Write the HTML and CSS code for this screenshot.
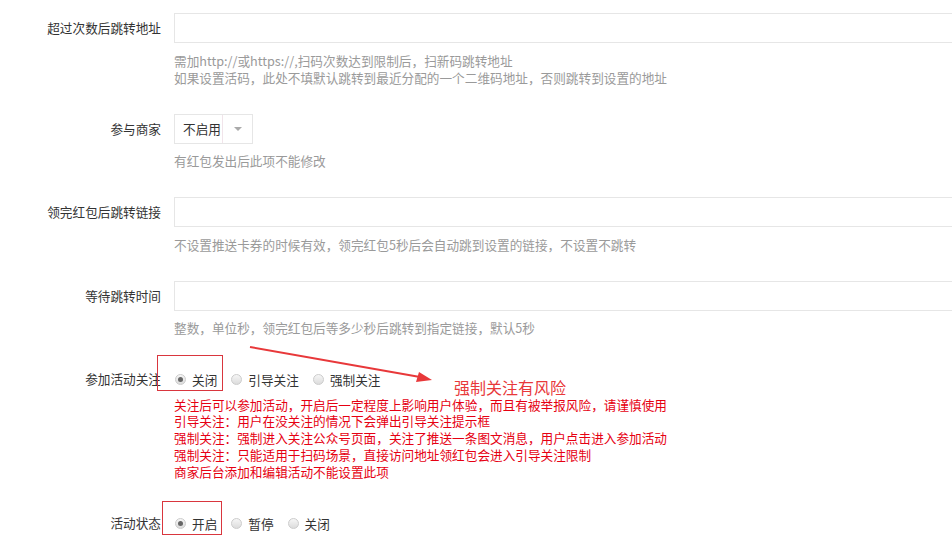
FILE: index.html
```html
<!DOCTYPE html>
<html lang="zh-CN">
<head>
<meta charset="utf-8">
<title>活动设置</title>
<link rel="stylesheet" href="styles.css">
</head>
<body>
<div class="page">
  <div class="group">
    <div class="label">超过次数后跳转地址</div>
    <div class="control">
      <div class="input"></div>
      <div class="help">需加http://或https://,扫码次数达到限制后，扫新码跳转地址<br>如果设置活码，此处不填默认跳转到最近分配的一个二维码地址，否则跳转到设置的地址</div>
    </div>
  </div>

  <div class="group">
    <div class="label">参与商家</div>
    <div class="control">
      <div class="select"><span class="select-text">不启用</span><span class="select-arrow"></span></div>
      <div class="help">有红包发出后此项不能修改</div>
    </div>
  </div>

  <div class="group">
    <div class="label">领完红包后跳转链接</div>
    <div class="control">
      <div class="input"></div>
      <div class="help">不设置推送卡券的时候有效，领完红包5秒后会自动跳到设置的链接，不设置不跳转</div>
    </div>
  </div>

  <div class="group">
    <div class="label">等待跳转时间</div>
    <div class="control">
      <div class="input"></div>
      <div class="help">整数，单位秒，领完红包后等多少秒后跳转到指定链接，默认5秒</div>
    </div>
  </div>

  <div class="group">
    <div class="label">参加活动关注</div>
    <div class="control">
      <div class="radios">
        <span class="mark-box mark-follow"></span>
        <label class="radio"><span class="dot checked"></span>关闭</label>
        <label class="radio"><span class="dot"></span>引导关注</label>
        <label class="radio"><span class="dot"></span>强制关注</label>
      </div>
      <div class="warn">关注后可以参加活动，开启后一定程度上影响用户体验，而且有被举报风险，请谨慎使用<br>引导关注：用户在没关注的情况下会弹出引导关注提示框<br>强制关注：强制进入关注公众号页面，关注了推送一条图文消息，用户点击进入参加活动<br>强制关注：只能适用于扫码场景，直接访问地址领红包会进入引导关注限制<br>商家后台添加和编辑活动不能设置此项</div>
    </div>
  </div>

  <div class="group">
    <div class="label">活动状态</div>
    <div class="control">
      <div class="radios">
        <span class="mark-box mark-status"></span>
        <label class="radio"><span class="dot checked"></span>开启</label>
        <label class="radio"><span class="dot"></span>暂停</label>
        <label class="radio"><span class="dot"></span>关闭</label>
      </div>
    </div>
  </div>

  <svg class="arrow" width="200" height="50" viewBox="0 0 200 50">
    <line x1="2" y1="2" x2="172" y2="32" stroke="#e8383a" stroke-width="2"/>
    <polygon points="184,35 168,37 171,27" fill="#e8383a"/>
  </svg>
  <div class="note">强制关注有风险</div>
</div>
</body>
</html>
```

FILE: styles.css
```css
html, body {
  margin: 0;
  padding: 0;
  background: #ffffff;
  overflow: hidden;
}
body {
  font-family: "Noto Sans CJK SC", "Microsoft YaHei", sans-serif;
  font-size: 12.65px;
  color: #333333;
}
.page {
  position: relative;
  padding-top: 13px;
  width: 1000px;
}
.group {
  display: flex;
  align-items: flex-start;
  margin-bottom: 28px;
}
.label {
  width: 161px;
  flex: none;
  margin-right: 13px;
  text-align: right;
  line-height: 30px;
  height: 30px;
  color: #333333;
  white-space: nowrap;
}
.control {
  flex: 1;
}
.input {
  box-sizing: border-box;
  height: 30px;
  width: 820px;
  border: 1px solid #e6e6e6;
  background: #ffffff;
}
.help {
  margin-top: 8.5px;
  line-height: 17px;
  color: #9a9a9a;
  white-space: nowrap;
}
.select {
  box-sizing: border-box;
  display: flex;
  align-items: center;
  width: 79px;
  height: 30px;
  border: 1px solid #e6e6e6;
}
.select-text {
  box-sizing: border-box;
  width: 48px;
  padding-left: 8px;
  height: 28px;
  line-height: 28px;
  border-right: 1px solid #f1e4ea;
  color: #333333;
}
.select-arrow {
  width: 0;
  height: 0;
  margin-left: 11px;
  margin-top: 1px;
  border-left: 4px solid transparent;
  border-right: 4px solid transparent;
  border-top: 4px solid #aaaaaa;
}
.radios {
  position: relative;
  display: flex;
  align-items: center;
  height: 30px;
}
.radio {
  display: flex;
  align-items: center;
  margin-right: 13px;
  color: #333333;
}
.dot {
  box-sizing: border-box;
  width: 11px;
  height: 11px;
  margin-left: 1px;
  margin-right: 6px;
  border-radius: 50%;
  border: 1px solid #cccccc;
  background: linear-gradient(#f6f6f6, #dcdcdc);
  display: flex;
  align-items: center;
  justify-content: center;
}
.dot.checked::after {
  content: "";
  width: 5px;
  height: 5px;
  border-radius: 50%;
  background: #666666;
}
.mark-box {
  position: absolute;
  box-sizing: border-box;
  border: 1px solid #d9363e;
}
.mark-follow {
  left: -17px;
  top: -9px;
  width: 66px;
  height: 36px;
}
.mark-status {
  left: -12px;
  top: -7px;
  width: 60px;
  height: 34px;
}
.warn {
  margin-top: 2.6px;
  line-height: 16.75px;
  color: #e60012;
  white-space: nowrap;
}
.arrow {
  position: absolute;
  left: 248px;
  top: 345px;
}
.note {
  position: absolute;
  left: 454px;
  top: 378px;
  font-size: 16px;
  line-height: 18px;
  color: #e8383a;
  white-space: nowrap;
}
```
